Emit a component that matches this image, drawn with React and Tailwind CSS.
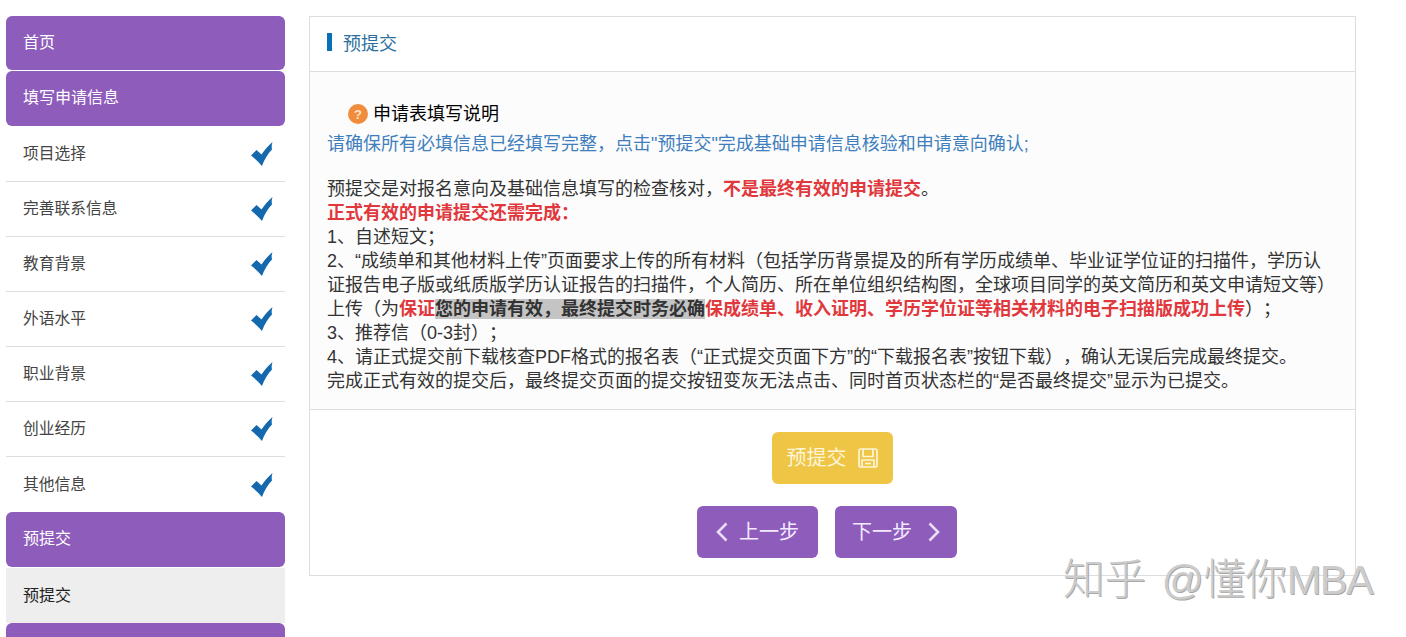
const FONT = "font-['Liberation_Sans','Noto_Sans_CJK_SC',sans-serif] [text-spacing-trim:space-all]";

function Check() {
  return (
    <svg width="24" height="26" viewBox="0 0 24 26" className="shrink-0">
      <path d="M1 14.5 L6.5 9 L11.5 13.5 C14.5 9 18 5 22.5 1 C21.5 4 21.5 6 22 8.5 C18 12.5 14.5 18 12 25 C8.5 21 5 17.5 1 14.5 Z" fill="#1469ae" />
    </svg>
  );
}

function Head({ children, h = "h-[55px] pb-[2px]" }) {
  return (
    <div className={`${h} shrink-0 flex items-center pl-[17px] rounded-md bg-[#8e5cbb] text-white text-[16px]`}>
      {children}
    </div>
  );
}

function Row({ children, last }) {
  return (
    <div className={`h-[55px] shrink-0 flex items-center justify-between pl-[17px] pr-[11px] text-[15.75px] text-[#444] ${last ? "" : "border-b border-[#dedede]"}`}>
      <span>{children}</span>
      <Check />
    </div>
  );
}

const R = ({ children }) => <b className="font-bold text-[#e0383c]">{children}</b>;

export default function App() {
  const rows = ["项目选择", "完善联系信息", "教育背景", "外语水平", "职业背景", "创业经历", "其他信息"];
  return (
    <div className={`${FONT} relative w-[1406px] h-[637px] overflow-hidden bg-white flex pl-[6px] pt-[16px]`}>
      <aside className="w-[279px] shrink-0 flex flex-col">
        <Head h="h-[54px] mb-px">首页</Head>
        <Head>填写申请信息</Head>
        <div className="h-px shrink-0" />
        {rows.map((r, i) => (
          <Row key={r} last={i === rows.length - 1}>{r}</Row>
        ))}
        <Head>预提交</Head>
        <div className="h-[55px] shrink-0 flex items-center pl-[17px] mt-px bg-[#eeeeee] text-[16px] text-[#222]">预提交</div>
        <div className="h-[40px] shrink-0 rounded-t-md bg-[#8e5cbb]" />
      </aside>

      <main className="ml-[24px] w-[1047px] h-[560px] shrink-0 border border-[#dddddd] flex flex-col">
        <div className="h-[55px] shrink-0 flex items-center border-b border-[#dddddd] pl-[17px]">
          <span className="w-[5px] h-[18px] bg-[#0b6fb8] mb-[4px]" />
          <span className="ml-[11px] text-[18px] text-[#2d6f9e] leading-none">预提交</span>
        </div>

        <div className="h-[338px] shrink-0 bg-[#fcfcfc] border-b border-[#dddddd] pl-[17px] pr-[20px] pt-[30px] text-[18px] leading-[24px] text-[#333]">
          <div className="flex items-center pl-[21px] text-black">
            <span className="w-5 h-5 mr-[5px] rounded-full bg-[#f08c3c] text-[#fde3c8] text-[13px] font-bold flex items-center justify-center leading-none">?</span>
            申请表填写说明
          </div>
          <div className="mt-[6px] text-[#3f7fbd] whitespace-nowrap">请确保所有必填信息已经填写完整，点击"预提交"完成基础申请信息核验和申请意向确认;</div>
          <div className="h-[21px]" />
          <div className="whitespace-nowrap">
            预提交是对报名意向及基础信息填写的检查核对，<R>不是最终有效的申请提交</R>。<br />
            <R>正式有效的申请提交还需完成：</R><br />
            1、自述短文；<br />
            2、“成绩单和其他材料上传”页面要求上传的所有材料（包括学历背景提及的所有学历成绩单、毕业证学位证的扫描件，学历认<br />
            证报告电子版或纸质版学历认证报告的扫描件，个人简历、所在单位组织结构图，全球项目同学的英文简历和英文申请短文等）<br />
            上传（为<R>保证</R><b className="font-bold text-[#333] bg-[#c4c4c4]">您的申请有效，最终提交时务必确</b><R>保成绩单、收入证明、学历学位证等相关材料的电子扫描版成功上传</R>）；<br />
            3、推荐信（0-3封）；<br />
            4、请正式提交前下载核查PDF格式的报名表（“正式提交页面下方”的“下载报名表”按钮下载），确认无误后完成最终提交。<br />
            完成正式有效的提交后，最终提交页面的提交按钮变灰无法点击、同时首页状态栏的“是否最终提交”显示为已提交。
          </div>
        </div>

        <div className="flex flex-col items-center pt-[22px]">
          <button className="w-[121px] h-[52px] rounded-md bg-[#efc545] text-[#fdf6d8] text-[20px] flex items-center justify-center gap-[10px]">
            预提交
            <svg width="22" height="22" viewBox="0 0 22 22" fill="none" stroke="#fdf6d8" strokeWidth="1.7">
              <rect x="2" y="2" width="18" height="18" rx="1.5" />
              <path d="M6 2 V9.5 H16 V2" />
              <path d="M5 20 V13 H17 V20" />
              <path d="M8 16.5 H14" />
            </svg>
          </button>
          <div className="flex gap-[17px] mt-[22px] mr-[11px]">
            <button className="w-[121px] h-[52px] rounded-md bg-[#8e5cbb] text-[#f3eaff] text-[20px] flex items-center justify-center gap-[11px]">
              <svg width="12" height="20" viewBox="0 0 12 20" fill="none" stroke="#e9dcf7" strokeWidth="2.6"><path d="M10.5 1.5 L2 10 L10.5 18.5" /></svg>
              上一步
            </button>
            <button className="w-[122px] h-[52px] rounded-md bg-[#8e5cbb] text-[#f3eaff] text-[20px] flex items-center justify-center gap-[16px]">
              下一步
              <svg width="12" height="20" viewBox="0 0 12 20" fill="none" stroke="#e9dcf7" strokeWidth="2.6"><path d="M1.5 1.5 L10 10 L1.5 18.5" /></svg>
            </button>
          </div>
        </div>
      </main>

      <div className="absolute left-[1063px] top-[556px] text-[41.5px] leading-[48px] font-light whitespace-nowrap text-[#cccccc] [text-shadow:1px_1px_0_#a8a8a8] [word-spacing:4px]">
        知乎 @懂你<span className="tracking-[-1.4px]">MBA</span>
      </div>
    </div>
  );
}
